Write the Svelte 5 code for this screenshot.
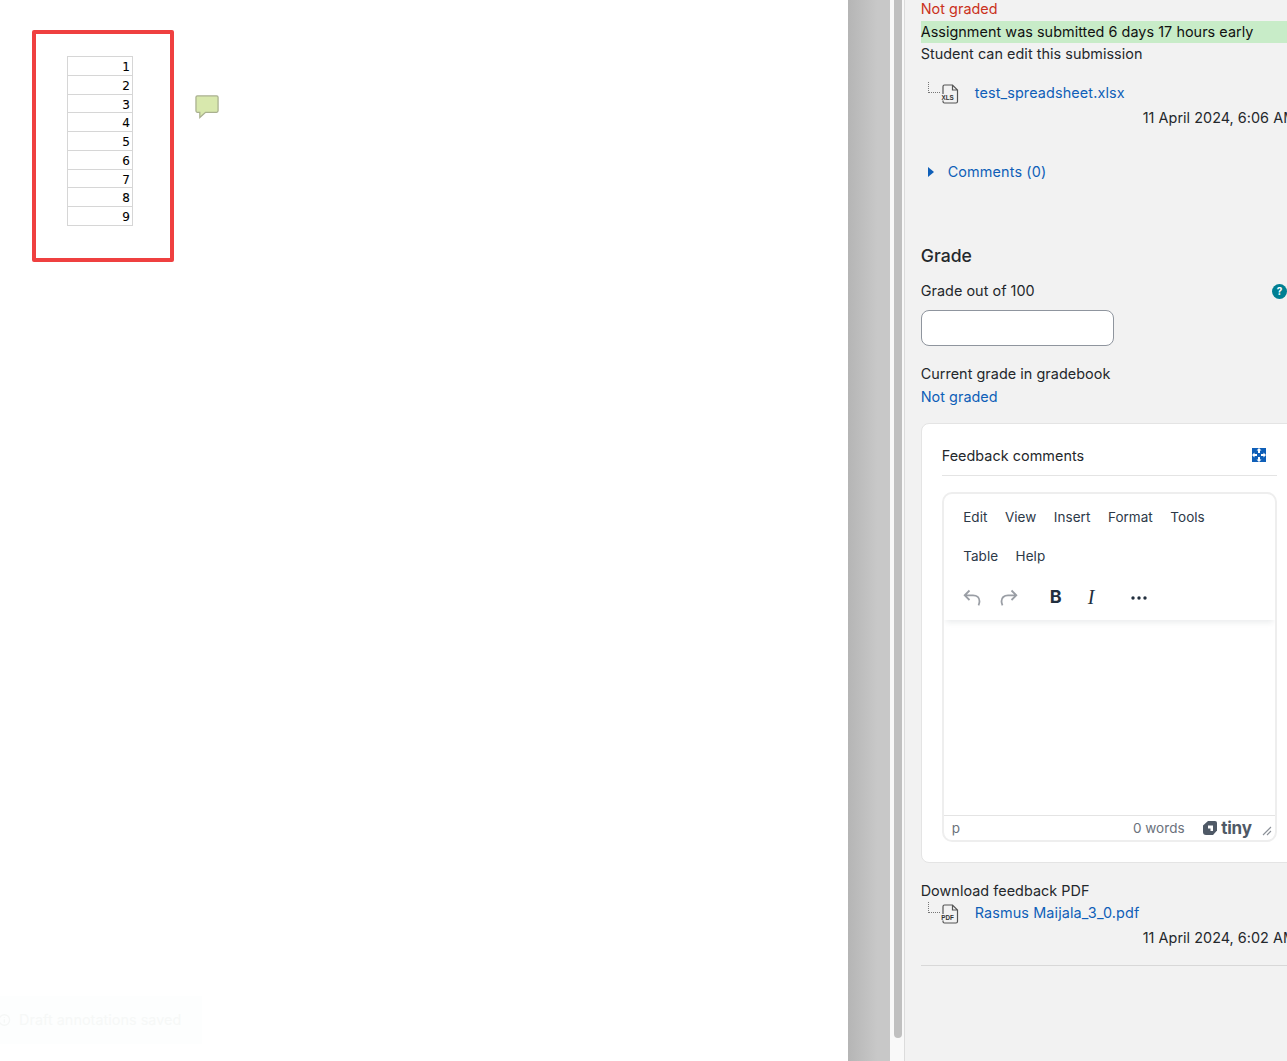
<script>
  const rows = [1, 2, 3, 4, 5, 6, 7, 8, 9];
</script>

<div class="page">
  <main class="viewer">
    <div class="sheet">
      <div class="marker">
        <div class="cells">
          {#each rows as r}
            <div class="cell">{r}</div>
          {/each}
        </div>
      </div>
      <svg class="bubble" viewBox="0 0 26 26" width="25" height="25" aria-hidden="true">
        <path d="M2.500 2h20a1.500 1.500 0 0 1 1.500 1.500v14a1.500 1.500 0 0 1-1.500 1.500H11l-6 5.500V19H2.500A1.500 1.500 0 0 1 1 17.500v-14A1.500 1.500 0 0 1 2.500 2z" fill="#d8e8ad" stroke="#a9b08f" stroke-width="1.300"/>
      </svg>
    </div>
    <div class="toast">
      <svg viewBox="0 0 16 16" width="14" height="14" aria-hidden="true"><circle cx="5" cy="8" r="6" fill="none" stroke="#f5f7f6" stroke-width="1.500"/><path d="M5 7v4M5 4.500v1" stroke="#f5f7f6" stroke-width="1.500"/></svg>
      <span>Draft annotations saved</span>
    </div>
  </main>

  <div class="gutter"><div class="strip"></div><div class="thumb"></div><div class="track"></div></div>

  <aside class="panel">
    <div class="red">Not graded</div>
    <div class="early">Assignment was submitted 6 days 17 hours early</div>
    <div class="line">Student can edit this submission</div>

    <div class="file first">
      <span class="tree"></span>
      <svg class="fileicon" viewBox="0 0 18 20" width="18" height="20" aria-hidden="true">
        <path d="M3.500 1h8L16.500 6v11.500a1.500 1.500 0 0 1-1.500 1.500H3.500A1.500 1.500 0 0 1 2 17.500v-15A1.500 1.500 0 0 1 3.500 1zM11.500 1v5h5" fill="none" stroke="#555" stroke-width="1.200"/>
        <rect x="0" y="10" width="14" height="6.500" fill="#f2f2f2"/>
        <text x="0.500" y="15.500" class="ft">XLS</text>
      </svg>
      <a href="#f">test_spreadsheet.xlsx</a>
    </div>
    <div class="date">11 April 2024, 6:06 AM</div>

    <div class="comments">
      <svg viewBox="0 0 6 10" width="6" height="10" aria-hidden="true"><path d="M0 0l6 5-6 5z" fill="#0f5fb8"/></svg>
      <a href="#c">Comments (0)</a>
    </div>

    <h3>Grade</h3>
    <div class="gradelabel">
      <span>Grade out of 100</span>
      <span class="help">?</span>
    </div>
    <input class="grade" type="text" aria-label="Grade out of 100" />
    <div class="current">Current grade in gradebook</div>
    <a class="notgraded" href="#g">Not graded</a>

    <section class="card">
      <div class="cardhead">
        <span>Feedback comments</span>
        <svg viewBox="0 0 14 14" width="14" height="14" aria-hidden="true">
          <rect width="14" height="14" fill="#0f5fb8"/>
          <path d="M7 0l2.500 2.500H8V5H6V2.500H4.500zM7 14l-2.500-2.500H6V9h2v2.500h1.500zM0 7l2.500-2.500V6H5v2H2.500v1.500zM14 7l-2.500 2.500V8H9V6h2.500V4.500z" fill="#fff"/>
        </svg>
      </div>
      <div class="editor">
        <div class="menus">
          <div class="menurow"><span>Edit</span><span>View</span><span>Insert</span><span>Format</span><span>Tools</span></div>
          <div class="menurow"><span>Table</span><span>Help</span></div>
        </div>
        <div class="tools">
          <svg class="t undo" viewBox="0 0 18 18" width="18" height="18" aria-hidden="true"><path d="M6.500 1.500L1.700 6.300l4.800 4.700M2 6.300h8c4 0 6.500 2.500 6.500 6 0 1.500-.5 3-1 4" fill="none" stroke="#9a9ea5" stroke-width="1.800"/></svg>
          <svg class="t redo" viewBox="0 0 18 18" width="18" height="18" aria-hidden="true"><path d="M11.500 1.500l4.800 4.800-4.800 4.700M16 6.300H8c-4 0-6.500 2.500-6.500 6 0 1.500.5 3 1 4" fill="none" stroke="#9a9ea5" stroke-width="1.800"/></svg>
          <b class="bold">B</b>
          <i class="ital">I</i>
          <svg class="more" viewBox="0 0 16 4" width="16" height="4" aria-hidden="true"><circle cx="2" cy="2" r="1.700" fill="#222f3e"/><circle cx="8" cy="2" r="1.700" fill="#222f3e"/><circle cx="14" cy="2" r="1.700" fill="#222f3e"/></svg>
        </div>
        <div class="area"></div>
        <div class="status">
          <span class="p">p</span>
          <span class="words">0 words</span>
          <svg class="tinylogo" viewBox="0 0 16 16" width="16" height="16" aria-hidden="true">
            <path d="M6 1h7a2 2 0 0 1 2 2v7.500L11 15H4a3 3 0 0 1-3-3V5.500z" fill="#4f5966"/>
            <path d="M6 5.500h5v5.500H8.500V8.500H6z" fill="#fff"/>
          </svg>
          <span class="tiny">tiny</span>
          <svg class="grip" viewBox="0 0 10 10" width="10" height="10" aria-hidden="true"><path d="M1 9l8-8M5 9l4-4" stroke="#8b9098" stroke-width="1.100" fill="none"/></svg>
        </div>
      </div>
    </section>

    <div class="dl">Download feedback PDF</div>
    <div class="file second">
      <span class="tree"></span>
      <svg class="fileicon" viewBox="0 0 18 20" width="18" height="20" aria-hidden="true">
        <path d="M3.500 1h8L16.500 6v11.500a1.500 1.500 0 0 1-1.500 1.500H3.500A1.500 1.500 0 0 1 2 17.500v-15A1.500 1.500 0 0 1 3.500 1zM11.500 1v5h5" fill="none" stroke="#555" stroke-width="1.200"/>
        <rect x="0" y="10" width="14" height="6.500" fill="#f2f2f2"/>
        <text x="0.200" y="15.500" class="ft">PDF</text>
      </svg>
      <a href="#p">Rasmus Maijala_3_0.pdf</a>
    </div>
    <div class="date second-date">11 April 2024, 6:02 AM</div>
    <hr />
  </aside>
</div>

<style>
  :global(body) {
    margin: 0;
    overflow: hidden;
  }
  .page {
    display: flex;
    width: 1287px;
    height: 1061px;
    overflow: hidden;
    font-family: Inter, "Liberation Sans", sans-serif;
    font-size: 14.4px;
    line-height: 22.500px;
    letter-spacing: 0.04px;
    color: #24282c;
  }
  .viewer {
    position: relative;
    flex: 0 0 848px;
    background: #fff;
  }
  .sheet {
    display: flex;
    align-items: flex-start;
    padding: 30px 0 0 32px;
  }
  .marker {
    box-sizing: border-box;
    width: 142px;
    height: 232px;
    border: 4px solid #ef4040;
    border-radius: 2px;
    padding: 22px 0 0 31px;
  }
  .cells {
    width: 66px;
    height: 170px;
    border: 1px solid #d6d6d6;
    box-sizing: border-box;
  }
  .cell {
    box-sizing: border-box;
    height: 18.750px;
    border-bottom: 1px solid #d6d6d6;
    text-align: right;
    padding-right: 2px;
    font-family: "DejaVu Sans", sans-serif;
    font-size: 12px;
    line-height: 20.600px;
    letter-spacing: 0;
    color: #000;
    -webkit-text-stroke: 0.1px #000;
  }
  .cell:last-child {
    border-bottom: 0;
    height: 18px;
  }
  .bubble {
    margin: 64px 0 0 20.500px;
  }
  .toast {
    position: absolute;
    left: 0;
    top: 996px;
    width: 202px;
    height: 48px;
    display: flex;
    align-items: center;
    gap: 5px;
    background: #fdfefe;
    color: #f6f8f7;
    font-size: 14.400px;
  }
  .gutter {
    flex: 0 0 57px;
    display: flex;
    background: #f9f9f9;
  }
  .strip {
    width: 42px;
    background: linear-gradient(90deg, #b5b5b5, #c8c8c8 70%);
  }
  .thumb {
    width: 8px;
    margin-left: 4px;
    height: 1038px;
    background: #c0c0c0;
    border-radius: 0 0 4px 4px;
  }
  .track {
    margin-left: 2px;
    width: 1px;
    background: #dcdcdc;
  }
  .panel {
    flex: 0 0 382px;
    box-sizing: border-box;
    padding: 0 0 0 15.700px;
    background: #f2f2f2;
    overflow: hidden;
    display: flex;
    flex-direction: column;
    align-items: flex-start;
  }
  .red {
    color: #ca3120;
    height: 20px;
    line-height: 18px;
  }
  .early {
    width: 100%;
    height: 22px;
    margin-top: 1px;
    background: #c8ecc8;
    line-height: 22px;
    color: #111;
  }
  .line {
    height: 22px;
    line-height: 22px;
    margin-top: 0;
  }
  .file {
    display: flex;
    align-items: center;
    position: relative;
    padding-left: 54px;
    height: 22px;
  }
  .file.first {
    margin-top: 17px;
  }
  .file a,
  .comments a {
    color: #0f5fb8;
    text-decoration: none;
    letter-spacing: 0.13px;
  }
  .notgraded {
    color: #0f5fb8;
    text-decoration: none;
  }
  .tree {
    position: absolute;
    left: 7px;
    top: 0;
    width: 11px;
    height: 10px;
    border-left: 1px dotted #777;
    border-bottom: 1px dotted #777;
  }
  .fileicon {
    position: absolute;
    left: 20px;
    top: 2px;
  }
  .ft {
    font-family: "Liberation Sans", sans-serif;
    font-size: 6.300px;
    font-weight: 700;
    fill: #333;
    letter-spacing: 0;
  }
  .date {
    width: 100%;
    white-space: nowrap;
    padding-left: 222px;
    box-sizing: border-box;
    margin-top: 3px;
    height: 22px;
    line-height: 22px;
  }
  .comments {
    display: flex;
    align-items: center;
    gap: 14px;
    margin-top: 32px;
    padding-left: 7px;
    height: 22px;
  }
  h3 {
    margin: 62px 0 0;
    font-size: 17.600px;
    font-weight: 500;
    line-height: 22px;
    height: 22px;
  }
  .gradelabel {
    display: flex;
    justify-content: space-between;
    align-items: center;
    width: 100%;
    margin-top: 13px;
    height: 22px;
  }
  .help {
    width: 15px;
    height: 15px;
    border-radius: 50%;
    background: #007f92;
    color: #fff;
    font-size: 10px;
    font-weight: 700;
    line-height: 15px;
    text-align: center;
    flex: none;
  }
  .grade {
    box-sizing: border-box;
    width: 193px;
    height: 36px;
    margin-top: 8px;
    background: #fff;
    border: 1px solid #8f959e;
    border-radius: 8px;
  }
  .current {
    margin-top: 16px;
    height: 23px;
    line-height: 23px;
  }
  .notgraded {
    height: 23px;
    line-height: 23px;
  }
  .card {
    box-sizing: border-box;
    width: 380px;
    height: 440px;
    margin-top: 15px;
    padding: 0 0 0 20px;
    background: #fff;
    border: 1px solid #e4e4e4;
    border-radius: 8px;
  }
  .cardhead {
    box-sizing: border-box;
    width: 335px;
    height: 52px;
    display: flex;
    justify-content: space-between;
    align-items: center;
    padding: 14px 11px 0 0;
    border-bottom: 1px solid #e4e4e4;
  }
  .cardhead svg {
    margin-top: -3px;
  }
  .editor {
    box-sizing: border-box;
    width: 335px;
    height: 350px;
    margin-top: 16px;
    border: 2px solid #eeeeee;
    border-radius: 10px;
    display: flex;
    flex-direction: column;
    overflow: hidden;
  }
  .menus {
    padding: 3px 0 0 19.500px;
    font-size: 13.500px;
    color: #222f3e;
  }
  .menurow {
    display: flex;
    gap: 17.500px;
    height: 39px;
    align-items: center;
    line-height: 20px;
  }
  .menurow span {
    opacity: 0.95;
  }
  .tools {
    position: relative;
    height: 45px;
    flex: none;
    box-shadow: 0 4px 6px -2px rgba(34, 47, 62, 0.1);
    display: flex;
    align-items: center;
    padding-left: 19px;
    color: #222f3e;
  }
  .t {
    flex: none;
  }
  .redo {
    margin-left: 19px;
  }
  .bold {
    margin-left: 32px;
    font-size: 18px;
    font-weight: 700;
    width: 14px;
  }
  .ital {
    margin-left: 24px;
    font-family: "Liberation Serif", serif;
    font-size: 20px;
    width: 10px;
  }
  .more {
    margin-left: 33px;
  }
  .area {
    flex: 1;
  }
  .status {
    height: 25px;
    flex: none;
    border-top: 1px solid #e4e4e4;
    display: flex;
    align-items: center;
    font-size: 13.500px;
    color: #6b727c;
    padding: 0 3px 0 8px;
    box-sizing: border-box;
  }
  .words {
    margin-left: auto;
  }
  .tinylogo {
    margin-left: 17.500px;
  }
  .tiny {
    font-weight: 700;
    font-size: 17px;
    color: #4f5966;
    margin-left: 3px;
    letter-spacing: -0.200px;
  }
  .grip {
    margin-left: 10px;
    margin-top: 5px;
  }
  .dl {
    margin-top: 17px;
    height: 22px;
    line-height: 22px;
  }
  .file.second {
    height: 22px;
    margin-top: 0;
  }
  .second-date {
    margin-top: 3px;
  }
  hr {
    width: 100%;
    margin: 16px 0 0;
    border: 0;
    border-top: 1px solid #d8d8d8;
  }
</style>
